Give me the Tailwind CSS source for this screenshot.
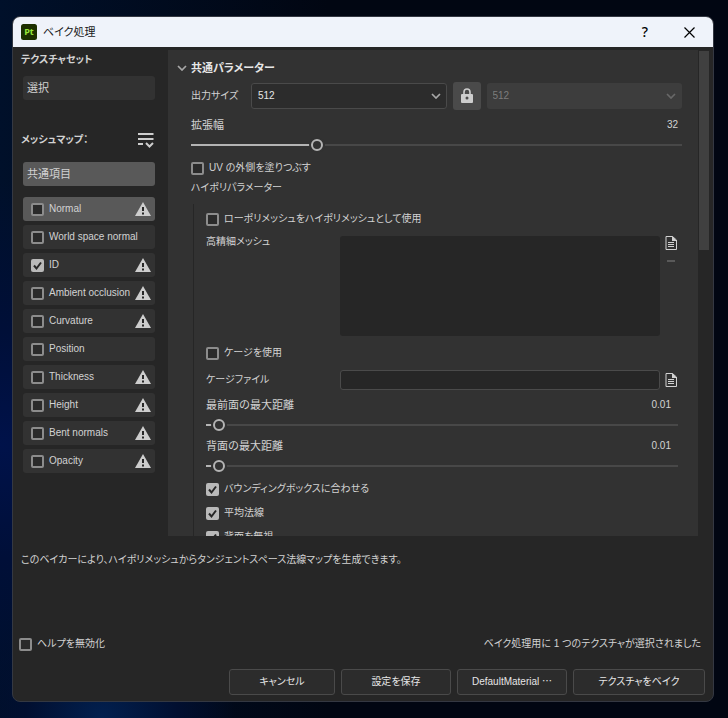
<!DOCTYPE html>
<html lang="ja">
<head>
    <meta charset="UTF-8">
    <meta name="viewport" content="width=device-width, initial-scale=1.0">
    <title>ベイク処理</title>
    <script src="https://cdn.jsdelivr.net/npm/@tailwindcss/browser@4"></script>
</head>
<body class="h-screen overflow-hidden bg-[#010612] bg-[radial-gradient(circle_at_14%_100%,#02204f_0,#010f30_8%,transparent_14%),radial-gradient(ellipse_at_0%_62%,#00124a_0,#000f38_18%,transparent_42%),linear-gradient(90deg,#00102a,#010612_45%)] pt-4 pr-3.5 pb-4 pl-3 font-['Liberation_Sans','Noto_Sans_CJK_JP',sans-serif] text-[11px] leading-5 text-[#d2d2d2]">

    <!-- Icons -->
    <svg class="hidden">
        <symbol id="chevron" viewBox="0 0 10 6"><path d="M1 1l4 4 4-4" fill="none" stroke="currentColor" stroke-width="1.7"/></symbol>
        <symbol id="check" viewBox="0 0 13 13"><path d="M3 6.5l2.5 3L10 3.500" fill="none" stroke="#262626" stroke-width="2"/></symbol>
        <symbol id="warning" viewBox="0 0 16 14"><path d="M8 0l8 14H0z" fill="#cdcdcd"/><path d="M7 5h2v4H7zM7 10.500h2v2H7z" fill="#262626"/></symbol>
        <symbol id="file" viewBox="0 0 12 14"><path d="M1 .5h6.500L11.500 4v9.500H1z" fill="none" stroke="currentColor"/><path d="M7 0l5 5H7z" fill="currentColor"/><path d="M3 6.500h6M3 8.500h6M3 10.500h6" stroke="currentColor"/></symbol>
    </svg>

    <div class="flex h-full flex-col overflow-hidden rounded-lg border border-[#343842] bg-[#262626]">
        <!-- Title bar -->
        <header class="flex h-[30px] shrink-0 items-center bg-[#eff3fa] pr-4 pl-2 text-black">
            <svg class="size-4" viewBox="0 0 16 16">
                <rect width="16" height="16" rx="2.500" fill="#1d3000"/>
                <text x="8" y="11" text-anchor="middle" font-family="Open Sans" font-weight="700" font-size="9" fill="#98e83a">Pt</text>
            </svg>
            <h1 class="ml-1.5 flex-1 text-[11px] text-[#1a1a1a] [font-feature-settings:'palt']">ベイク処理</h1>
            <button class="w-6 font-['Noto_Sans'] text-[14px] font-medium" aria-label="ヘルプ">?</button>
            <button class="ml-6 flex size-4 items-center justify-center" aria-label="閉じる">
                <svg class="size-[11px]" viewBox="0 0 11 11"><path d="M.5.5l10 10M10.500.5l-10 10" stroke="#000" stroke-width="1.200"/></svg>
            </button>
        </header>

        <main class="flex min-h-0 flex-1">
            <!-- Map list -->
            <aside class="w-[155px] shrink-0 pt-[3px] pr-[13px] pl-2.5">
                <h2 class="-ml-0.5 text-[10px] font-bold [font-feature-settings:'palt']">テクスチャセット</h2>
                <button class="mt-1.5 block h-6 w-full rounded-[3px] bg-[#323232] px-1 text-left">選択</button>
                <div class="-ml-0.5 mt-7 flex h-6 items-center justify-between pr-px">
                    <h2 class="text-[10px] font-bold [font-feature-settings:'palt']">メッシュマップ：</h2>
                    <button aria-label="メッシュマップの選択">
                        <svg class="size-4" viewBox="0 0 16 16"><path d="M0 2h15.500M0 7h15.500M0 12h5M8 11l3.500 3.500L15 11" fill="none" stroke="#cdcdcd" stroke-width="2"/></svg>
                    </button>
                </div>
                <button class="mt-2.5 block h-6 w-full rounded-[3px] bg-[#595959] px-1 text-left">共通項目</button>
                <ul id="maps" class="mt-[11px] flex w-full flex-col gap-1"></ul>
            </aside>

            <!-- Parameters -->
            <section class="mt-[3px] min-w-0 flex-1 overflow-hidden bg-[#323232] pt-1.5 pr-4 pl-[23px]">
                <h2 class="-ml-3.5 flex h-6 items-center gap-1 text-[11px] font-bold text-[#e6e6e6] [font-feature-settings:'palt']">
                    <svg class="h-1.5 w-2.5 text-[#a8a8a8]"><use href="#chevron"/></svg>共通パラメーター
                </h2>
                <div class="mt-0.5 flex h-7 items-center gap-1.5">
                    <label for="width" class="w-[54px] shrink-0 text-[10px] [font-feature-settings:'palt']">出力サイズ</label>
                    <div class="relative flex-1">
                        <select id="width" class="block h-[26px] w-full appearance-none rounded-[3px] border border-[#4a4a4a] bg-[#2c2c2c] px-1.5 text-[10px] text-[#e6e6e6]"><option>512</option></select>
                        <svg class="pointer-events-none absolute top-2.5 right-1.5 h-1.5 w-2.5 text-[#a8a8a8]"><use href="#chevron"/></svg>
                    </div>
                    <button class="flex size-7 items-center justify-center rounded-[3px] bg-[#4a4a4a]" aria-label="縦横比を固定">
                        <svg class="h-4 w-3" viewBox="0 0 12 16"><path d="M3 7V4a3 3 0 0 1 6 0v3" fill="none" stroke="#cdcdcd" stroke-width="1.600"/><rect y="6" width="12" height="9" rx="1" fill="#cdcdcd"/><circle cx="6" cy="10" r="1.500" fill="#4a4a4a"/></svg>
                    </button>
                    <div class="relative flex-1">
                        <select aria-label="高さ" disabled class="block h-[26px] w-full appearance-none rounded-[3px] bg-[#3d3d3d] px-1.5 text-[10px] text-[#7c7c7c] opacity-100"><option>512</option></select>
                        <svg class="pointer-events-none absolute top-2.5 right-1.5 h-1.5 w-2.5 text-[#686868]"><use href="#chevron"/></svg>
                    </div>
                </div>
                <div class="mt-[5px] flex justify-between pr-1">
                    <label for="dilation">拡張幅</label><output for="dilation" class="text-[10px]">32</output>
                </div>
                <input id="dilation" type="range" value="25" class="block h-5 w-full appearance-none bg-[linear-gradient(90deg,#b4b4b4_26%,#484848_26%)] bg-[length:100%_2px] bg-center bg-no-repeat [&::-webkit-slider-thumb]:size-3 [&::-webkit-slider-thumb]:appearance-none [&::-webkit-slider-thumb]:rounded-full [&::-webkit-slider-thumb]:border-2 [&::-webkit-slider-thumb]:border-[#b4b4b4] [&::-webkit-slider-thumb]:bg-[#323232] [&::-webkit-slider-thumb]:shadow-[0_0_0_2px_#323232]">
                <label class="mt-[3px] flex items-center gap-[5px] text-[10px] [font-feature-settings:'palt']">
                    <span class="grid size-[13px]">
                        <input type="checkbox" class="peer col-start-1 row-start-1 size-[13px] appearance-none rounded-[2px] border-2 border-[#8c8c8c] bg-[#2a2a2a] checked:border-0 checked:bg-[#b9b9b9]">
                        <svg class="pointer-events-none col-start-1 row-start-1 hidden size-[13px] peer-checked:block"><use href="#check"/></svg>
                    </span>UV の外側を塗りつぶす
                </label>
                <h3 class="text-[10px] [font-feature-settings:'palt']">ハイポリパラメーター</h3>

                <div class="mt-1.5 ml-0.5 border-l border-[#262626] pt-[5px] pr-1 pb-4 pl-3">
                    <label class="flex items-center gap-[5px] text-[10px] [font-feature-settings:'palt']">
                        <span class="grid size-[13px]">
                            <input type="checkbox" class="peer col-start-1 row-start-1 size-[13px] appearance-none rounded-[2px] border-2 border-[#8c8c8c] bg-[#2a2a2a] checked:border-0 checked:bg-[#b9b9b9]">
                            <svg class="pointer-events-none col-start-1 row-start-1 hidden size-[13px] peer-checked:block"><use href="#check"/></svg>
                        </span>ローポリメッシュをハイポリメッシュとして使用
                    </label>
                    <div class="mt-[7px] flex items-start">
                        <label for="meshes" class="w-[134px] shrink-0 text-[10px] leading-3 [font-feature-settings:'palt']">高精細メッシュ</label>
                        <textarea id="meshes" class="h-[100px] min-w-0 flex-1 resize-none rounded-[3px] bg-[#262626]"></textarea>
                        <div class="flex w-[18px] flex-col items-end gap-2.5 pr-px">
                            <button aria-label="ファイルを追加"><svg class="h-3.5 w-3"><use href="#file"/></svg></button>
                            <button class="mr-0.5 h-0.5 w-2 bg-[#595959]" aria-label="ファイルを削除"></button>
                        </div>
                    </div>
                    <label class="mt-[7px] flex items-center gap-[5px] text-[10px] [font-feature-settings:'palt']">
                        <span class="grid size-[13px]">
                            <input type="checkbox" class="peer col-start-1 row-start-1 size-[13px] appearance-none rounded-[2px] border-2 border-[#8c8c8c] bg-[#2a2a2a] checked:border-0 checked:bg-[#b9b9b9]">
                            <svg class="pointer-events-none col-start-1 row-start-1 hidden size-[13px] peer-checked:block"><use href="#check"/></svg>
                        </span>ケージを使用
                    </label>
                    <div class="mt-[7px] flex items-center">
                        <label for="cage" class="w-[134px] shrink-0 text-[10px] [font-feature-settings:'palt']">ケージファイル</label>
                        <input id="cage" type="text" class="h-5 min-w-0 flex-1 rounded-[3px] border border-[#4a4a4a] bg-[#262626] px-1">
                        <button class="flex w-[18px] justify-end pr-px" aria-label="ケージファイルを開く"><svg class="h-3.5 w-3"><use href="#file"/></svg></button>
                    </div>
                    <div class="mt-[5px] flex justify-between pr-[7px]">
                        <label for="front">最前面の最大距離</label><output for="front" class="text-[10px]">0.01</output>
                    </div>
                    <input id="front" type="range" step="0.5" value="1.5" class="block h-5 w-full appearance-none bg-[linear-gradient(90deg,#b4b4b4_3%,#484848_3%)] bg-[length:100%_2px] bg-center bg-no-repeat [&::-webkit-slider-thumb]:size-3 [&::-webkit-slider-thumb]:appearance-none [&::-webkit-slider-thumb]:rounded-full [&::-webkit-slider-thumb]:border-2 [&::-webkit-slider-thumb]:border-[#b4b4b4] [&::-webkit-slider-thumb]:bg-[#323232] [&::-webkit-slider-thumb]:shadow-[0_0_0_2px_#323232]">
                    <div class="mt-px flex justify-between pr-[7px]">
                        <label for="rear">背面の最大距離</label><output for="rear" class="text-[10px]">0.01</output>
                    </div>
                    <input id="rear" type="range" step="0.5" value="1.5" class="block h-5 w-full appearance-none bg-[linear-gradient(90deg,#b4b4b4_3%,#484848_3%)] bg-[length:100%_2px] bg-center bg-no-repeat [&::-webkit-slider-thumb]:size-3 [&::-webkit-slider-thumb]:appearance-none [&::-webkit-slider-thumb]:rounded-full [&::-webkit-slider-thumb]:border-2 [&::-webkit-slider-thumb]:border-[#b4b4b4] [&::-webkit-slider-thumb]:bg-[#323232] [&::-webkit-slider-thumb]:shadow-[0_0_0_2px_#323232]">
                    <div id="options" class="mt-[3px] flex flex-col gap-1"></div>
                </div>
            </section>
            <div class="w-[15px] shrink-0 pt-1 pl-px"><div class="h-[199px] w-2.5 bg-[#404040]"></div></div>
        </main>

        <footer class="flex h-[165px] shrink-0 flex-col px-2 pt-3.5 pb-1.5">
            <p class="flex-1 text-[10px] [font-feature-settings:'palt']">このベイカーにより、ハイポリメッシュからタンジェントスペース法線マップを生成できます。</p>
            <div class="-ml-0.5 flex items-center justify-between pr-1 text-[10px] [font-feature-settings:'palt']">
                <label class="flex items-center gap-[5px]">
                    <span class="grid size-[13px]">
                        <input type="checkbox" class="peer col-start-1 row-start-1 size-[13px] appearance-none rounded-[2px] border-2 border-[#8c8c8c] bg-[#2a2a2a] checked:border-0 checked:bg-[#b9b9b9]">
                        <svg class="pointer-events-none col-start-1 row-start-1 hidden size-[13px] peer-checked:block"><use href="#check"/></svg>
                    </span>ヘルプを無効化
                </label>
                <p>ベイク処理用に 1 つのテクスチャが選択されました</p>
            </div>
            <div class="mt-[15px] flex justify-end gap-1.5 text-[10px] text-[#e6e6e6] [font-feature-settings:'palt']">
                <button class="h-[26px] w-[106px] rounded-[3px] border border-[#4a4a4a] bg-[#2c2c2c]">キャンセル</button>
                <button class="h-[26px] w-[110px] rounded-[3px] border border-[#4a4a4a] bg-[#2c2c2c]">設定を保存</button>
                <button class="h-[26px] w-[110px] rounded-[3px] border border-[#4a4a4a] bg-[#2c2c2c]">DefaultMaterial ⋯</button>
                <button class="h-[26px] w-[132px] rounded-[3px] border border-[#4a4a4a] bg-[#2c2c2c]">テクスチャをベイク</button>
            </div>
        </footer>
    </div>

    <script>
        const maps = [
            { name: "Normal", warning: true, selected: true },
            { name: "World space normal" },
            { name: "ID", warning: true, checked: true },
            { name: "Ambient occlusion", warning: true },
            { name: "Curvature", warning: true },
            { name: "Position" },
            { name: "Thickness", warning: true },
            { name: "Height", warning: true },
            { name: "Bent normals", warning: true },
            { name: "Opacity", warning: true }
        ];
        const options = ["バウンディングボックスに合わせる", "平均法線", "背面を無視"];

        function checkbox(checked) {
            return `
                <span class="grid size-[13px] shrink-0">
                    <input type="checkbox" ${checked ? "checked" : ""} class="peer col-start-1 row-start-1 size-[13px] appearance-none rounded-[2px] border-2 border-[#8c8c8c] bg-[#2a2a2a] checked:border-0 checked:bg-[#b9b9b9]">
                    <svg class="pointer-events-none col-start-1 row-start-1 hidden size-[13px] peer-checked:block"><use href="#check"/></svg>
                </span>`;
        }

        document.getElementById("maps").innerHTML = maps.map(map => `
            <li class="flex h-6 items-center rounded-[3px] pr-1 pl-2 text-[10px] ${map.selected ? "bg-[#595959]" : "bg-[#323232]"}">
                <label class="flex flex-1 items-center gap-[5px] whitespace-nowrap">${checkbox(map.checked)}${map.name}</label>
                ${map.warning ? '<svg class="h-3.5 w-4 shrink-0"><use href="#warning"/></svg>' : ""}
            </li>`).join("");

        document.getElementById("options").innerHTML = options.map(name => `
            <label class="flex items-center gap-[5px] text-[10px] [font-feature-settings:'palt']">${checkbox(true)}${name}</label>`).join("");
    </script>
</body>
</html>
